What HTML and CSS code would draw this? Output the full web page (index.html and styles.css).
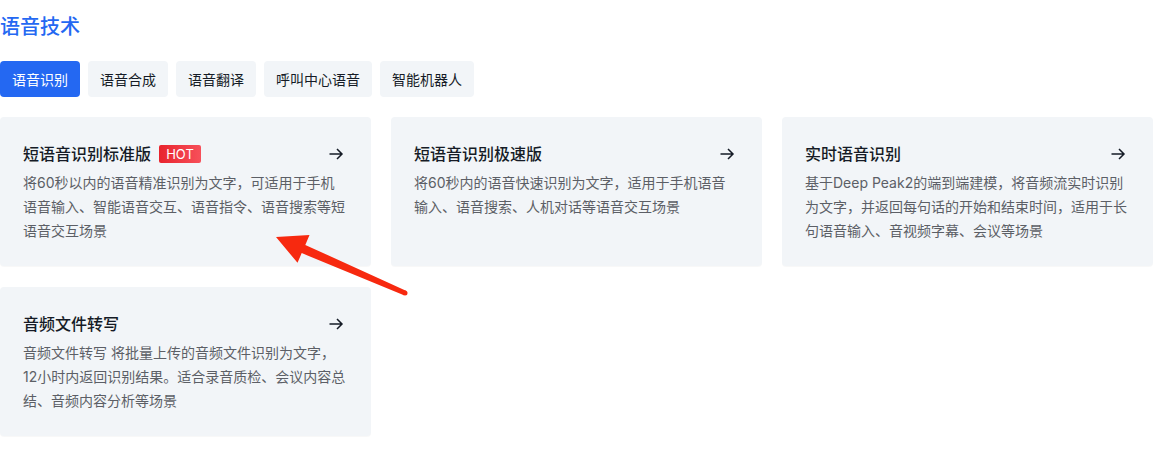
FILE: index.html
```html
<!DOCTYPE html>
<html lang="zh-CN">
<head>
<meta charset="utf-8">
<title>语音技术</title>
<link rel="stylesheet" href="styles.css">
</head>
<body>
<div class="page">
  <h2 class="section-title">语音技术</h2>
  <div class="tabs">
    <div class="tab active">语音识别</div>
    <div class="tab">语音合成</div>
    <div class="tab">语音翻译</div>
    <div class="tab">呼叫中心语音</div>
    <div class="tab">智能机器人</div>
  </div>
  <div class="cards">
    <div class="card">
      <div class="card-head">
        <div class="card-title">短语音识别标准版<span class="hot">HOT</span></div>
        <svg class="go" width="16" height="16" viewBox="0 0 16 16"><path d="M1.5 8H14M9 3l5 5-5 5" fill="none" stroke="#151b26" stroke-width="1.5"/></svg>
      </div>
      <p class="card-desc">将60秒以内的语音精准识别为文字，可适用于手机语音输入、智能语音交互、语音指令、语音搜索等短语音交互场景</p>
    </div>
    <div class="card">
      <div class="card-head">
        <div class="card-title">短语音识别极速版</div>
        <svg class="go" width="16" height="16" viewBox="0 0 16 16"><path d="M1.5 8H14M9 3l5 5-5 5" fill="none" stroke="#151b26" stroke-width="1.5"/></svg>
      </div>
      <p class="card-desc">将60秒内的语音快速识别为文字，适用于手机语音输入、语音搜索、人机对话等语音交互场景</p>
    </div>
    <div class="card">
      <div class="card-head">
        <div class="card-title">实时语音识别</div>
        <svg class="go" width="16" height="16" viewBox="0 0 16 16"><path d="M1.5 8H14M9 3l5 5-5 5" fill="none" stroke="#151b26" stroke-width="1.5"/></svg>
      </div>
      <p class="card-desc">基于Deep Peak2的端到端建模，将音频流实时识别为文字，并返回每句话的开始和结束时间，适用于长句语音输入、音视频字幕、会议等场景</p>
    </div>
    <div class="card">
      <div class="card-head">
        <div class="card-title">音频文件转写</div>
        <svg class="go" width="16" height="16" viewBox="0 0 16 16"><path d="M1.5 8H14M9 3l5 5-5 5" fill="none" stroke="#151b26" stroke-width="1.5"/></svg>
      </div>
      <p class="card-desc">音频文件转写 将批量上传的音频文件识别为文字，12小时内返回识别结果。适合录音质检、会议内容总结、音频内容分析等场景</p>
    </div>
  </div>
  <svg class="annot" width="1171" height="450" viewBox="0 0 1171 450">
    <polygon points="276,237 309.5,235 305.3,244.9 406,290.7 404,295.3 301.7,253.1 297.5,262.8" fill="#f7290f"/>
    <circle cx="405" cy="293" r="2.5" fill="#f7290f"/>
  </svg>
</div>
</body>
</html>
```
FILE: styles.css
```css
* { box-sizing: border-box; }
html, body { margin: 0; padding: 0; background: #fff; }
body {
  font-family: Inter, "Noto Sans CJK SC", sans-serif;
  color: #151b26;
}
.page { position: relative; width: 1171px; height: 450px; overflow: hidden; }
.section-title {
  margin: 13px 0 0;
  font-size: 20px;
  line-height: 28px;
  font-weight: 500;
  color: #2468f2;
}
.tabs { display: flex; gap: 8px; margin-top: 20px; }
.tab {
  height: 36px;
  padding: 0 12px;
  display: flex;
  align-items: center;
  font-size: 14px;
  color: #151b26;
  background: #f2f5f8;
  border-radius: 4px;
}
.tab.active { background: #2468f2; color: #fff; }
.cards {
  display: grid;
  grid-template-columns: repeat(3, 371px);
  column-gap: 20px;
  row-gap: 21px;
  margin-top: 20px;
}
.card {
  background: #f2f5f8;
  border-radius: 4px;
  padding: 25px 25px 23px 23px;
  box-shadow: 0 1px 1px rgba(0,0,0,0.03);
}
.card-head { display: flex; align-items: center; justify-content: space-between; height: 24px; margin-right: -1px; }
.card-title { font-size: 16px; line-height: 24px; font-weight: 500; display: flex; align-items: center; }
.hot {
  margin-left: 8px;
  height: 18px;
  width: 42px;
  display: inline-flex;
  align-items: center;
  justify-content: center;
  font-size: 13px;
  font-weight: 400;
  color: #fff;
  border-radius: 2px;
  background: linear-gradient(90deg, #e8242d, #f7505a);
}
.go { margin-right: 3px; }
.card-desc {
  margin: 5px 0 0;
  font-size: 14px;
  line-height: 24px;
  color: #5c5f66;
}
.annot { position: absolute; left: 0; top: 0; pointer-events: none; }
```
